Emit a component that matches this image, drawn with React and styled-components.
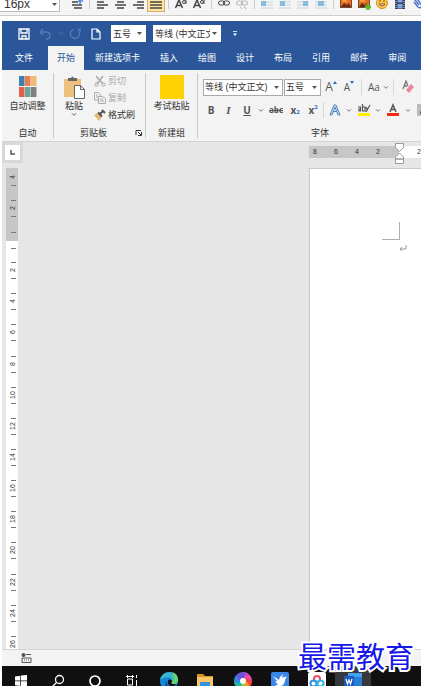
import React from 'react';
import styled, { createGlobalStyle } from 'styled-components';

const Global = createGlobalStyle`
  * { box-sizing: border-box; }
  body { margin: 0; background: #fff; font: 9px/12px "Liberation Sans", "Noto Sans CJK SC", sans-serif; color: #333; }
  button, select { font: inherit; color: inherit; border: 0; padding: 0; margin: 0; background: none; }
`;

const Screen = styled.div`
  position: relative;
  display: flex;
  flex-direction: column;
  height: 100vh;
  overflow: hidden;
`;

const Icon = styled.svg`
  display: block;
  flex: none;
  width: ${(p) => p.$w || 12}px;
  height: ${(p) => p.$h || p.$w || 12}px;
  fill: none;
  stroke: currentColor;
  overflow: visible;
`;

/* ---------- web editor strip ---------- */
const EditorBar = styled.div`
  display: flex;
  flex: none;
  height: 27px;
  margin-top: -11px;
  overflow: hidden;
  background: #f4f4f4;
  border-bottom: 1px solid #ccc;
`;
const EditorButton = styled.button`
  display: grid;
  place-items: center;
  flex: none;
  width: 18px;
  height: 23px;
  padding-top: 5px;
  color: ${(p) => (p.$faded ? '#b5b5b5' : '#444')};
  background: ${(p) => (p.$active ? '#ffe5a0' : 'none')};
  border: ${(p) => (p.$active ? '1px solid #dcac6c' : '0')};
`;
const EditorRule = styled.span`
  flex: none;
  width: 1px;
  height: 20px;
  margin: 0 3px;
  background: #ccc;
`;
const PickerBox = styled.span`
  display: grid;
  flex: none;
  align-items: center;
  width: ${(p) => p.$w}px;
  height: ${(p) => p.$h}px;
  background: #fff;
  color: #333;
  border: 1px solid ${(p) => p.$line || '#fff'};
  > * { grid-area: 1 / 1; }
  > svg { justify-self: end; margin-right: 3px; pointer-events: none; }
`;
const PickerSelect = styled.select`
  appearance: none;
  width: 100%;
  height: 100%;
  padding: 0 10px 0 1px;
  font-size: ${(p) => p.$size}px;
  border-radius: 0;
`;
const EditorPicker = styled(PickerBox)`
  margin-right: 8px;
  border-left: 0;
  > select { padding-top: 6px; padding-left: 4px; }
  > svg { margin: 8px 2px 0 0; }
`;
const RibbonPicker = styled(PickerBox)`
  margin-right: 1px;
`;

function Picker({ as: Box = PickerBox, label, value, w, h, size = 10, line }) {
  return (
    <Box $w={w} $h={h} $line={line}>
      <PickerSelect aria-label={label} $size={size} defaultValue={value}>
        <option>{value}</option>
      </PickerSelect>
      <Icon viewBox="0 0 5 3" $w={5} $h={3}><path d="M0 0h5L2.500 3z" fill="#555" stroke="none" /></Icon>
    </Box>
  );
}

const Lines = ({ d }) => (
  <Icon viewBox="0 0 12 12"><path d={d} strokeWidth="1.500" /></Icon>
);
const Letters = () => (
  <Icon viewBox="0 0 12 12">
    <path d="M.5 11 4 3l3.500 8M2 8.500h4" strokeWidth="1.500" />
    <circle cx="9" cy="5" r="1.500" /><path d="M11 3v4" />
  </Icon>
);
const Chain = ({ cut }) => (
  <Icon viewBox="0 0 12 12">
    <rect x=".5" y="4" width="6" height="4" rx="2" /><rect x="5.500" y="4" width="6" height="4" rx="2" />
    {cut && <path d="M4 10l2 2M8 9l2 3" />}
  </Icon>
);
const Wrap = ({ x, w }) => (
  <Icon viewBox="0 0 12 12">
    <path d="M0 2h12M0 5h12M0 8h12M0 11h12" stroke="#c4d4de" />
    <rect x={x} y="4" width={w} height="5" fill="#86bbdc" stroke="none" />
  </Icon>
);
const Photo = ({ add }) => (
  <Icon viewBox="0 0 12 12">
    <rect x=".5" y="1.500" width="11" height="9" fill="#e86d20" stroke="#7a4a2c" />
    <path d="M1 10l3-4 3 2 2-2 2 4z" fill="#6a2b12" stroke="none" /><path d="M2 4h5" stroke="#ffc261" />
    {add && <path d="M10 7v6M7 10h6" stroke="#65b32e" strokeWidth="3" />}
  </Icon>
);

function EditorStrip() {
  return (
    <EditorBar>
      <Picker as={EditorPicker} label="字号" value="16px" w={60} h={23} size={12} line="#bbb" />
      <EditorButton aria-label="行间距"><Icon viewBox="0 0 12 12"><path d="M1 2h6M1 5h6M1 8h10M3 11h8" strokeWidth="1.500" /><path d="M9 1v6M7 4h5" stroke="#4b83e6" strokeWidth="1.500" /></Icon></EditorButton>
      <EditorRule />
      <EditorButton aria-label="左对齐"><Lines d="M1 2h11M1 5h7M1 8h11M1 11h7" /></EditorButton>
      <EditorButton aria-label="居中"><Lines d="M1 2h11M3 5h7M1 8h11M3 11h7" /></EditorButton>
      <EditorButton aria-label="右对齐"><Lines d="M1 2h11M5 5h7M1 8h11M5 11h7" /></EditorButton>
      <EditorButton aria-label="两端对齐" $active><Lines d="M0 2h12M0 5h12M0 8h12M0 11h12" /></EditorButton>
      <EditorRule />
      <EditorButton aria-label="大写"><Letters /></EditorButton>
      <EditorButton aria-label="小写"><Letters /></EditorButton>
      <EditorRule />
      <EditorButton aria-label="链接"><Chain /></EditorButton>
      <EditorButton aria-label="取消链接" $faded><Chain cut /></EditorButton>
      <EditorRule />
      <EditorButton aria-label="默认"><Wrap x={0} w={5} /></EditorButton>
      <EditorButton aria-label="左浮动"><Wrap x={1} w={5} /></EditorButton>
      <EditorButton aria-label="右浮动"><Wrap x={6} w={5} /></EditorButton>
      <EditorButton aria-label="图片居中"><Wrap x={3} w={6} /></EditorButton>
      <EditorRule />
      <EditorButton aria-label="图片"><Photo /></EditorButton>
      <EditorButton aria-label="多图"><Photo add /></EditorButton>
      <EditorButton aria-label="表情"><Icon viewBox="0 0 12 12"><circle cx="6" cy="6" r="5.500" fill="#fbc94a" stroke="#d58a1e" /><path d="M3 7q3 4 6 0z" fill="#fff" stroke="#8b4b10" /><path d="M4 3v2M8 3v2" stroke="#8b4b10" /></Icon></EditorButton>
      <EditorButton aria-label="视频"><Icon viewBox="0 0 12 12"><rect x="1" y="0" width="10" height="12" fill="#333c55" stroke="none" /><path d="M3.500 1h5v4.500h-5zM3.500 7h5v4.500h-5z" fill="#7fa5e8" stroke="none" /><path d="M2 0v12M10 0v12" stroke="#ddd" strokeDasharray="1 1" /></Icon></EditorButton>
      <EditorButton aria-label="附件"><Icon viewBox="0 0 12 12"><path d="M2 5l4 5q3 2 4-1L6 3q-2-2-3 0l4 5" stroke="#4b78d2" strokeWidth="1.500" /></Icon></EditorButton>
    </EditorBar>
  );
}

/* ---------- word window ---------- */
const WordWindow = styled.div`
  display: flex;
  flex-direction: column;
  flex: 1;
  min-height: 0;
  margin: 5px 0 0 2px;
`;
const TitleBar = styled.div`
  display: flex;
  align-items: center;
  flex: none;
  height: 25px;
  padding-left: 15px;
  background: #2b579a;
  color: #fff;
`;
const TitleButton = styled.button`
  display: grid;
  place-items: center;
  flex: none;
  width: ${(p) => p.$w}px;
  height: 18px;
  color: ${(p) => (p.$off ? '#5579b0' : '#fff')};
`;
const TitlePickers = styled.div`
  display: flex;
  gap: 7px;
  margin: 0 8px 0 6px;
`;
const TabRow = styled.nav`
  display: flex;
  flex: none;
  gap: 2px;
  height: 24px;
  overflow: hidden;
  background: #2b579a;
`;
const Tab = styled.button`
  flex: none;
  padding: 0 ${(p) => (p.$wide ? 13 : 9)}px;
  white-space: nowrap;
  color: ${(p) => (p.$active ? '#2b579a' : '#fff')};
  background: ${(p) => (p.$active ? '#f3f3f3' : 'none')};
`;

const Ribbon = styled.div`
  display: flex;
  flex: none;
  height: 72px;
  padding: 3px 0;
  background: #f3f3f3;
  border-bottom: 1px solid #d2d2d2;
`;
const Group = styled.section`
  display: flex;
  flex-direction: column;
  flex: none;
  width: ${(p) => p.$w}px;
  border-right: 1px solid #c8c8c8;
`;
const GroupBody = styled.div`
  display: flex;
  flex: 1;
  justify-content: ${(p) => p.$align || 'center'};
`;
const GroupFoot = styled.footer`
  display: flex;
  align-items: center;
  height: 10px;
  text-align: center;
  white-space: nowrap;
  > span { flex: 1; }
`;
const BigButton = styled.button`
  display: flex;
  flex-direction: column;
  align-items: center;
  gap: 1px;
  width: ${(p) => p.$w || 44}px;
  padding-top: 2px;
  white-space: nowrap;
`;
const SmallStack = styled.div`
  display: flex;
  flex-direction: column;
  gap: 1px;
`;
const SmallButton = styled.button`
  display: flex;
  align-items: center;
  gap: 2px;
  height: 16px;
  white-space: nowrap;
  color: ${(p) => (p.$off ? '#aaa' : '#333')};
`;
const Launcher = styled.button`
  display: grid;
  place-items: center;
  width: 12px;
`;

const FontGroup = styled.section`
  display: flex;
  flex-direction: column;
  flex: 1;
  min-width: 0;
  overflow: hidden;
  padding-left: 5px;
`;
const ToolRow = styled.div`
  display: flex;
  align-items: center;
  flex: none;
  height: 18px;
  margin-top: 5px;
`;
const Tool = styled.button`
  display: grid;
  place-items: center;
  flex: none;
  width: ${(p) => p.$w || 18}px;
  height: 18px;
  font: ${(p) => (p.$bold ? 'bold' : 'normal')} ${(p) => p.$size || 10}px/12px "Open Sans", sans-serif;
  color: #555;
`;
const ItalicTool = styled(Tool)`font-family: "Liberation Serif", serif; font-style: italic;`;
const UnderTool = styled(Tool)`text-decoration: underline;`;
const StrikeTool = styled(Tool)`text-decoration: line-through;`;
const ToolRule = styled.span`
  flex: none;
  width: 1px;
  height: 16px;
  margin: 0 ${(p) => p.$gap || 3}px;
  background: #d8d8d8;
`;
const FontName = styled.footer`
  width: 234px;
  height: 10px;
  line-height: 10px;
  margin-top: auto;
  text-align: center;
`;
const Script = styled.span`
  display: flex;
  align-items: ${(p) => (p.$up ? 'flex-start' : 'flex-end')};
  small { font-size: 6px; line-height: 7px; color: #2b6cb8; }
`;

const Down = () => <Icon viewBox="0 0 5 3" $w={4} $h={3}><path d="M0 0l2.500 2.500L5 0" /></Icon>;

const tabs = ['文件', '开始', '新建选项卡', '插入', '绘图', '设计', '布局', '引用', '邮件', '审阅'];

function Head() {
  return (
    <>
      <TitleBar>
        <TitleButton $w={14} aria-label="保存"><Icon viewBox="0 0 12 12"><path d="M1 1h10v10H1zM3 1v4h6V1M4 11V8h4v3" strokeWidth="1.300" /></Icon></TitleButton>
        <TitleButton $w={28} $off aria-label="撤消"><Icon viewBox="0 0 12 12"><path d="M4 1L1 4l3 3M1 4h6q4 0 4 3.500T7 11" strokeWidth="1.500" /></Icon></TitleButton>
        <TitleButton $w={4} $off aria-label="撤消列表"><Down /></TitleButton>
        <TitleButton $w={24} $off aria-label="重复"><Icon viewBox="0 0 12 12" $w={11}><path d="M8 1.500h3v3M11 1.500L9 3M4 1.500a5 5 0 1 0 6 3" strokeWidth="1.500" /></Icon></TitleButton>
        <TitleButton $w={18} aria-label="新建"><Icon viewBox="0 0 10 12" $w={10} $h={12}><path d="M1 1h5l3 3v7H1zM6 1v3h3" strokeWidth="1.200" /></Icon></TitleButton>
        <TitlePickers>
          <Picker label="字号" value="五号" w={35} h={17} size={9} />
          <Picker label="字体" value="等线 (中文正文)" w={68} h={17} size={9} />
        </TitlePickers>
        <TitleButton $w={12} aria-label="自定义快速访问工具栏"><Icon viewBox="0 0 5 6" $w={4} $h={5}><path d="M0 .5h5" /><path d="M0 3h5L2.500 6z" fill="#fff" stroke="none" /></Icon></TitleButton>
      </TitleBar>
      <TabRow>
        {tabs.map((t, i) => <Tab key={t} $wide={i === 0} $active={i === 1}>{t}</Tab>)}
      </TabRow>
    </>
  );
}

const swatches = ['#3f7fae', '#e97d4c', '#eebb78', '#e2604b', '#6aa595', '#808080'];

function RibbonArea() {
  return (
    <Ribbon>
      <Group $w={52}>
        <GroupBody>
          <BigButton>
            <Icon viewBox="0 0 18 24" $w={18} $h={24}>
              {swatches.map((c, i) => <rect key={c} x={(i % 3) * 6} y={i < 3 ? 1 : 12} width="5.500" height="10" fill={c} stroke="none" />)}
            </Icon>
            自动调整
          </BigButton>
        </GroupBody>
        <GroupFoot><span>自动</span></GroupFoot>
      </Group>
      <Group $w={92}>
        <GroupBody $align="flex-start">
          <BigButton $w={40}>
            <Icon viewBox="0 0 22 24" $w={22} $h={24}>
              <path d="M1 4h17v18H1z" fill="#edc17d" stroke="none" />
              <path d="M5 6V3h3q1-3 3 0h3v3z" fill="#666" stroke="none" />
              <path d="M11.500 10.500h6l4 4v9h-10zM17.500 10.500v4h4" fill="#fff" stroke="#666" />
            </Icon>
            粘贴
            <Down />
          </BigButton>
          <SmallStack>
            <SmallButton $off><Icon viewBox="0 0 12 12"><path d="M2 1l7 8M9 1L3 9" strokeWidth="1.500" /><circle cx="2.500" cy="9.500" r="1.700" /><circle cx="9.500" cy="9.500" r="1.700" /></Icon>剪切</SmallButton>
            <SmallButton $off><Icon viewBox="0 0 12 12"><path d="M4 8H.5V.5h4l2 2V4M4.500 4.500h4l3 2v5h-7zM2 3h2M2 5h2M6 7h3M6 9h4" /></Icon>复制</SmallButton>
            <SmallButton><Icon viewBox="0 0 12 12"><path d="M0 6l4-2 4 4-3 4z" fill="#edb676" stroke="none" /><path d="M4 3.500l4 4M6 5l3-3M8 1l3 3" stroke="#555" strokeWidth="2" /></Icon>格式刷</SmallButton>
          </SmallStack>
        </GroupBody>
        <GroupFoot>
          <span>剪贴板</span>
          <Launcher aria-label="剪贴板选项"><Icon viewBox="0 0 6 6" $w={6}><path d="M0 5V.5h5M2 2l3 3M5.500 2v3.500H2" /></Icon></Launcher>
        </GroupFoot>
      </Group>
      <Group $w={52}>
        <GroupBody>
          <BigButton>
            <Icon viewBox="0 0 24 24" $w={24}><path d="M0 0h24v24H0z" fill="#ffd206" stroke="none" /></Icon>
            考试粘贴
          </BigButton>
        </GroupBody>
        <GroupFoot><span>新建组</span></GroupFoot>
      </Group>
      <FontGroup>
        <ToolRow>
          <Picker as={RibbonPicker} label="字体" value="等线 (中文正文)" w={80} h={17} size={9} line="#aaa" />
          <Picker as={RibbonPicker} label="字号" value="五号" w={37} h={17} size={9} line="#aaa" />
          <Tool aria-label="增大字号" $size={12}><Script $up>A<Icon viewBox="0 0 4 3" $w={4} $h={3}><path d="M0 3l2-3 2 3z" fill="#2b6cb8" stroke="none" /></Icon></Script></Tool>
          <Tool aria-label="减小字号"><Script $up>A<Icon viewBox="0 0 4 3" $w={4} $h={3}><path d="M0 0l2 3 2-3z" fill="#2b6cb8" stroke="none" /></Icon></Script></Tool>
          <ToolRule />
          <Tool aria-label="更改大小写">Aa</Tool>
          <Tool $w={6} aria-label="大小写列表"><Down /></Tool>
          <ToolRule $gap={4} />
          <Tool $w={20} aria-label="清除格式"><Icon viewBox="0 0 12 12"><path d="M1 8L4 0l2 5M2 5h3" stroke="#777" strokeWidth="1.300" /><path d="M4 9l5-6 3 3-5 6z" fill="#e8899a" stroke="none" /></Icon></Tool>
          <Tool aria-label="拼音指南"><Icon viewBox="0 0 12 12"><path d="M2 1l1 3 1-3 1 3 1-3M3 7h5M5 6v2M8 8q-1 3-5 4M4 8q1 3 5 4" /></Icon></Tool>
        </ToolRow>
        <ToolRow>
          <Tool $w={16} $bold>B</Tool>
          <ItalicTool $w={19} $bold $size={11}>I</ItalicTool>
          <UnderTool $bold>U</UnderTool>
          <Tool $w={10} aria-label="下划线列表"><Down /></Tool>
          <StrikeTool $w={20} $size={8} $bold>abc</StrikeTool>
          <Tool $bold aria-label="下标"><Script>x<small>2</small></Script></Tool>
          <Tool $bold aria-label="上标"><Script $up>x<small>2</small></Script></Tool>
          <ToolRule $gap={1} />
          <Tool $w={20} aria-label="文本效果"><Icon viewBox="0 0 12 12"><path d="M1 11L5 1h2l4 10H9L6 3 3 11zM4 7.500h4" stroke="#4f83bd" fill="#d9e8f7" /></Icon></Tool>
          <Tool $w={8} aria-label="效果列表"><Down /></Tool>
          <Tool $w={22} aria-label="突出显示"><Icon viewBox="0 0 12 12"><path d="M0 3h2.500v4H1V5h1.500M4.500 0v7H7V3H4.500M8 3l1.500 4M12 1L8 8" strokeWidth="1.200" /><path d="M0 10.500h12" stroke="#ffee00" strokeWidth="3" /></Icon></Tool>
          <Tool $w={6} aria-label="突出显示列表"><Down /></Tool>
          <Tool $w={24} aria-label="字体颜色"><Icon viewBox="0 0 12 12"><path d="M3 8l3-7 3 7M4 5.500h4" strokeWidth="1.500" /><path d="M0 10.500h12" stroke="#f62a14" strokeWidth="3" /></Icon></Tool>
          <Tool $w={6} aria-label="颜色列表"><Down /></Tool>
          <Tool $w={24} aria-label="字符底纹"><Icon viewBox="0 0 12 12"><path d="M0 0h12v12H0z" fill="#bbb" stroke="none" /><path d="M3 10l3-8 3 8M4 7h4" /></Icon></Tool>
        </ToolRow>
        <FontName>字体</FontName>
      </FontGroup>
    </Ribbon>
  );
}

/* ---------- document area ---------- */
const Workspace = styled.main`
  display: grid;
  grid-template-columns: 21px 1fr 112px;
  grid-template-rows: 26px 1fr;
  flex: 1;
  min-height: 0;
  overflow: hidden;
  background: #e6e6e6;
`;
const TabStop = styled.button`
  display: grid;
  place-items: center;
  align-self: start;
  width: 21px;
  height: 21px;
  background: #fff;
  border: 3px solid #d8d8d8;
  color: #555;
`;
const TopRuler = styled.div`
  display: flex;
  height: 12px;
  margin-top: 4px;
  font-size: 7px;
  line-height: 12px;
  overflow: hidden;
`;
const RulerCell = styled.span`
  flex: none;
  width: 21px;
  padding-left: 4px;
  background: #c6c6c6;
`;
const RulerEnd = styled.span`
  flex: none;
  width: 6px;
  background: #c6c6c6;
`;
const RulerWhite = styled.span`
  flex: 1;
  padding-left: 18px;
  background: #fff;
`;
const TopRulerWrap = styled.div`
  grid-column: 3;
  position: relative;
`;
const Indent = styled.span`
  position: absolute;
  left: 86px;
  top: 1px;
`;
const SideRuler = styled.div`
  display: flex;
  flex-direction: column;
  width: 12px;
  margin-left: 4px;
  min-height: 0;
  overflow: hidden;
  background: #fff;
  font-size: 7px;
  line-height: 8px;
`;
const SideMargin = styled.div`
  display: flex;
  flex-direction: column;
  justify-content: flex-end;
  flex: none;
  height: 73px;
  overflow: hidden;
  background: #c6c6c6;
`;
const SideCells = styled.div`
  display: flex;
  flex-direction: column;
  flex: 1;
  margin-bottom: -11px;
`;
const SideCell = styled.div`
  display: flex;
  flex-direction: column;
  align-items: center;
  justify-content: center;
  flex: ${(p) => (p.$h ? 'none' : '1 0 0')};
  height: ${(p) => (p.$h ? `${p.$h}px` : 'auto')};
  padding-left: 2px;
`;
const Tick = styled.i`
  width: 5px;
  height: 1px;
  background: #777;
`;
const SideNumber = styled.span`
  height: 15px;
  text-align: center;
  writing-mode: vertical-rl;
  transform: rotate(180deg);
`;
const Page = styled.article`
  grid-column: 3;
  background: #fff;
  border: solid #c8c8c8;
  border-width: 1px 0 0 1px;
  padding: 53px 0 0 72px;
`;
const MarginCorner = styled.div`
  width: 18px;
  height: 18px;
  border: solid #b0b0b0;
  border-width: 0 1px 1px 0;
`;
const Paragraph = styled.p`
  margin: 4px 0 0 17px;
  color: #999;
`;

const Numbered = ({ n, h, first }) => (
  <SideCell $h={h}>{!first && <Tick />}<SideNumber>{n}</SideNumber><Tick /></SideCell>
);
const numbers = [2, 4, 6, 8, 10, 12, 14, 16, 18, 20, 22, 24, 26];

function DocumentArea() {
  return (
    <Workspace>
      <TabStop aria-label="制表符"><Icon viewBox="0 0 5 5" $w={5}><path d="M1 0v4h4" strokeWidth="1.500" /></Icon></TabStop>
      <TopRulerWrap>
        <TopRuler>
          {[8, 6, 4, 2].map((n) => <RulerCell key={n}>{n}</RulerCell>)}
          <RulerEnd />
          <RulerWhite>2</RulerWhite>
        </TopRuler>
        <Indent><Icon viewBox="0 0 9 21" $w={9} $h={21}><path d="M.5.5h8v4l-4 4-4-4zM4.500 10l4 4v2h-8v-2zM.5 16h8v4.500h-8z" fill="#fff" stroke="#999" /></Icon></Indent>
      </TopRulerWrap>
      <SideRuler>
        <SideMargin>
          <Numbered n={4} h={31} first />
          <Numbered n={2} h={31} />
          <SideCell $h={17}><Tick /></SideCell>
        </SideMargin>
        <SideCell $h={14}><Tick /></SideCell>
        <SideCells>{numbers.map((n) => <Numbered key={n} n={n} />)}</SideCells>
      </SideRuler>
      <Page>
        <MarginCorner />
        <Paragraph><Icon viewBox="0 0 8 8" $w={8}><path d="M7 1v4H1M3 3L1 5l2 2" /></Icon></Paragraph>
      </Page>
    </Workspace>
  );
}

const StatusBar = styled.div`
  display: flex;
  align-items: center;
  flex: none;
  height: 17px;
  padding-left: 19px;
  background: #f3f3f3;
  border-top: 1px solid #d4d4d4;
  color: #555;
`;

/* ---------- desktop taskbar ---------- */
const Taskbar = styled.div`
  display: flex;
  flex: none;
  height: 20px;
  margin-left: 2px;
  overflow: hidden;
  background: #101010;
  color: #fff;
`;
const TaskButton = styled.button`
  display: flex;
  justify-content: center;
  align-items: flex-start;
  flex: none;
  width: ${(p) => (p.$active ? 36 : 37)}px;
  height: 40px;
  padding-top: ${(p) => p.$top || 6}px;
  background: ${(p) => (p.$active ? '#36383d' : 'none')};
`;
const Watermark = styled.div`
  position: absolute;
  right: 7px;
  bottom: 14px;
  font: 400 29px/34px "Noto Sans CJK SC", sans-serif;
  white-space: nowrap;
  color: #1717e8;
  -webkit-text-stroke: 4px #fff;
  paint-order: stroke fill;
`;

const wheel = ['#b84bd0', '#ee4ba0', '#f4473b', '#f59b23', '#8acb3f', '#22b7a0', '#2a8bea', '#6a55d8'];

function Tasks() {
  return (
    <Taskbar>
      <TaskButton $top={9} aria-label="开始"><Icon viewBox="0 0 12 12"><path d="M0 1.500l5.300-.8v4.800H0zM6 .6L12 0v5.500H6zM0 6.200h5.300V11L0 10.300zM6 6.200h6V12l-6-.8z" fill="#fff" stroke="none" /></Icon></TaskButton>
      <TaskButton $top={9} aria-label="搜索"><Icon viewBox="0 0 12 12"><circle cx="7.500" cy="4.500" r="4" strokeWidth="1.300" /><path d="M4.500 7.500L0 12" strokeWidth="1.300" /></Icon></TaskButton>
      <TaskButton $top={9} aria-label="助手"><Icon viewBox="0 0 12 12"><circle cx="6" cy="6" r="5" strokeWidth="1.700" /></Icon></TaskButton>
      <TaskButton $top={9} aria-label="任务视图"><Icon viewBox="0 0 12 14" $w={12} $h={14}><path d="M0 1.500h8M1.500 4h5v6h-5zM1.500 0v3M6.500 0v3M0 12.500h8M10.500 0v3M10.500 5v9" /></Icon></TaskButton>
      <TaskButton aria-label="浏览器">
        <Icon viewBox="0 0 18 18" $w={18}>
          <circle cx="9" cy="9" r="9" fill="#1686d9" stroke="none" />
          <path d="M0 8Q2 0 10 0q8 1 8 8c0 4-4 5-7 3 3-5-3-7-7-5Q1 7 0 8z" fill="#38b4cc" stroke="none" />
          <path d="M12 0q6 2 6 8c0 4-4 5-7 3 4-2 3-7 1-11z" fill="#67d66b" stroke="none" />
          <path d="M7 8q-2 5 4 7 3 1 6-1-3 4-8 4-7-4-2-10z" fill="#0b4f9b" stroke="none" />
          <path d="M8 9q1-3 3-1 2 1 0 3 2 2 6 1-3 3-7 2-3-2-2-5z" fill="#101010" stroke="none" />
        </Icon>
      </TaskButton>
      <TaskButton $top={8} aria-label="文件夹"><Icon viewBox="0 0 17 16" $w={17} $h={16}><path d="M0 0h6l2 2h8v14H0z" fill="#d9951f" stroke="none" /><path d="M0 3h16v13H0z" fill="#f9c666" stroke="none" /><path d="M3 16V8h10v8h-3v-4H6v4z" fill="#3592dc" stroke="none" /></Icon></TaskButton>
      <TaskButton aria-label="彩色浏览器">
        <Icon viewBox="0 0 18 18" $w={18}>
          {wheel.map((c, i) => <path key={c} d="M9 9Q5 4 9 0q6 0 7 5z" fill={c} stroke="none" transform={`rotate(${i * 45} 9 9)`} />)}
          <circle cx="9" cy="9" r="3" fill="#fff" stroke="none" />
        </Icon>
      </TaskButton>
      <TaskButton aria-label="飞鸟"><Icon viewBox="0 0 18 18" $w={18}><rect width="18" height="18" rx="2" fill="#3b86ea" stroke="none" /><path d="M2 4l6 4q1-4 4-6l-1 4q3-2 5-1-2 1-2 4-1 5-6 6l-4-1 3-2-3-2 2-1z" fill="#fff" stroke="none" /></Icon></TaskButton>
      <TaskButton aria-label="网盘"><Icon viewBox="0 0 18 18" $w={18}><rect width="18" height="18" rx="2" fill="#fff" stroke="none" /><circle cx="9" cy="7" r="3" stroke="#ed4b65" strokeWidth="2" /><circle cx="5.500" cy="11.500" r="3" stroke="#2b93ed" strokeWidth="2" /><circle cx="12.500" cy="11.500" r="3" stroke="#2bbbea" strokeWidth="2" /></Icon></TaskButton>
      <TaskButton $active $top={7} aria-label="文档">
        <Icon viewBox="0 0 18 16" $w={18} $h={16}>
          <path d="M4 0h14v16H4z" fill="#2b7cd3" stroke="none" /><path d="M4 0h14v4H4z" fill="#41a5ee" stroke="none" />
          <path d="M0 3h10v10H0z" fill="#185abd" stroke="none" /><path d="M2 6l1.500 5L5 7l1.500 4L8 6" strokeWidth="1.200" />
        </Icon>
      </TaskButton>
    </Taskbar>
  );
}

export default function App() {
  return (
    <Screen>
      <Global />
      <EditorStrip />
      <WordWindow>
        <Head />
        <RibbonArea />
        <DocumentArea />
        <StatusBar><Icon viewBox="0 0 10 10" $w={10}><path d="M5 1.500h5M1 5h9v4.500H1zM3 7h1M5 7h1M7 7h1" /><circle cx="2.500" cy="2" r="2" fill="#555" stroke="none" /></Icon></StatusBar>
      </WordWindow>
      <Tasks />
      <Watermark>最需教育</Watermark>
    </Screen>
  );
}
